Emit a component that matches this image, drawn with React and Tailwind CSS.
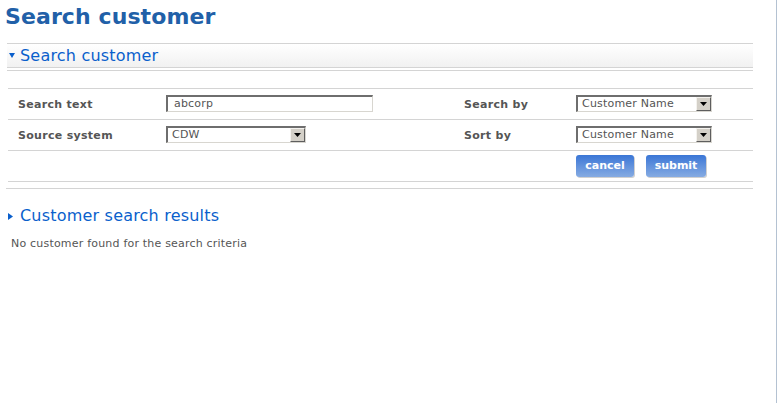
import React from "react";

function Select({ value, width }) {
  return (
    <div
      className="mb-[2px] flex h-[17px] items-stretch border-t-2 border-l-2 border-b border-r border-t-[#6e6e6e] border-l-[#6e6e6e] border-b-[#d8d6d0] border-r-[#d8d6d0] bg-white"
      style={{ width }}
    >
      <div className="flex-1 pl-[4px] text-[11px] leading-[14px] tracking-[0.2px] text-[#555]">{value}</div>
      <div className="flex w-[15px] items-center justify-center border border-t-[#f4f2ee] border-l-[#f4f2ee] border-b-[#5e5e5e] border-r-[#5e5e5e] bg-[#d4d0c8]">
        <svg width="7" height="4" viewBox="0 0 7 4">
          <path d="M0 0h7L3.5 4z" fill="#000" />
        </svg>
      </div>
    </div>
  );
}

function Button({ children, width }) {
  return (
    <div
      className="flex h-[22px] items-center justify-center rounded-[3px] bg-gradient-to-b from-[#3a76d6] to-[#86abe2] text-[11px] font-bold text-white shadow-[1px_1px_0_#d0d0d0]"
      style={{ width }}
    >
      {children}
    </div>
  );
}

export default function App() {
  return (
    <div className="relative h-[403px] w-[777px] border-r border-[#b4c2d2] bg-white font-['DejaVu_Sans',Verdana,sans-serif] text-[#555]">
      <h1 className="ml-[5px] pt-[3px] text-[22px] font-bold leading-[28px] tracking-[0.1px] text-[#2160a8]">
        Search customer
      </h1>

      <div className="ml-[7px] mt-[12px] w-[746px]">
        <div className="flex h-[25px] items-center border-t border-b border-[#d4d4d4] bg-gradient-to-b from-white to-[#f1f1f1]">
          <svg className="ml-[2px]" width="6" height="5" viewBox="0 0 6 5">
            <path d="M0 0h6L3 5z" fill="#0a5fcc" />
          </svg>
          <span className="ml-[5px] text-[16px] leading-[20px] tracking-[0.2px] text-[#0a5fcc]">Search customer</span>
        </div>
        <div className="mt-[2px] border-t border-[#d4d4d4]" />
      </div>

      <div className="ml-[8px] mt-[17px] w-[745px] border-t border-[#d4d4d4] text-[11px]">
        <div className="flex h-[31px] items-center border-b border-[#d4d4d4]">
          <div className="w-[158px] pl-[10px] pt-[3px] font-bold tracking-[0.3px] text-[#555]">Search text</div>
          <div className="mb-[2px] h-[17px] w-[207px] border-t-2 border-l-2 border-b border-r border-t-[#6e6e6e] border-l-[#6e6e6e] border-b-[#d8d6d0] border-r-[#d8d6d0] pl-[6px] leading-[14px] tracking-[0.2px] text-[#555]">
            abcorp
          </div>
          <div className="ml-[91px] w-[112px] pt-[3px] font-bold tracking-[0.3px] text-[#555]">Search by</div>
          <Select value="Customer Name" width={136} />
        </div>
        <div className="flex h-[31px] items-center border-b border-[#d4d4d4]">
          <div className="w-[158px] pl-[10px] pt-[3px] font-bold tracking-[0.3px] text-[#555]">Source system</div>
          <Select value="CDW" width={140} />
          <div className="ml-[158px] w-[112px] pt-[3px] font-bold tracking-[0.3px] text-[#555]">Sort by</div>
          <Select value="Customer Name" width={136} />
        </div>
        <div className="flex h-[31px] items-center border-b border-[#d4d4d4] pl-[568px]">
          <Button width={58}>cancel</Button>
          <div className="ml-[12px]">
            <Button width={60}>submit</Button>
          </div>
        </div>
      </div>

      <div className="ml-[6px] mt-[6px] w-[747px] border-t border-[#d4d4d4]" />

      <div className="ml-[8px] mt-[17px] flex h-[20px] items-center">
        <svg width="5" height="7" viewBox="0 0 5 7">
          <path d="M0 0v7l5-3.5z" fill="#0a5fcc" />
        </svg>
        <span className="ml-[7px] text-[16px] leading-[20px] tracking-[0.2px] text-[#0a5fcc]">Customer search results</span>
      </div>
      <div className="ml-[11px] mt-[11px] text-[11px] leading-[14px] tracking-[0.2px] text-[#555]">
        No customer found for the search criteria
      </div>
    </div>
  );
}
